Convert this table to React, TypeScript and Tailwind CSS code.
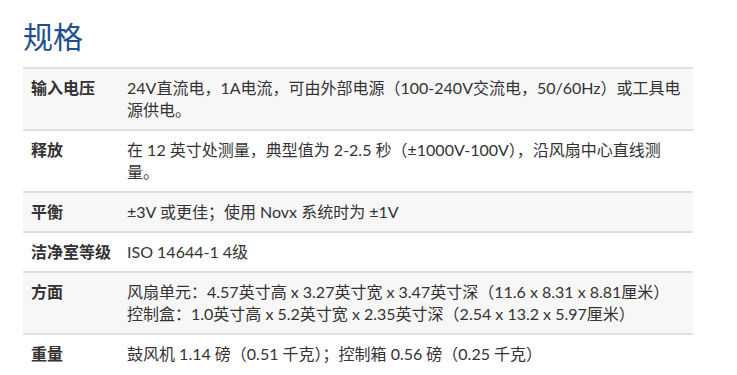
const specs: { label: string; lines: string[] }[] = [
  {
    label: '输入电压',
    lines: ['24V直流电，1A电流，可由外部电源（100-240V交流电，50/60Hz）或工具电源供电。'],
  },
  {
    label: '释放',
    lines: ['在 12 英寸处测量，典型值为 2-2.5 秒（±1000V-100V），沿风扇中心直线测量。'],
  },
  { label: '平衡', lines: ['±3V 或更佳；使用 Novx 系统时为 ±1V'] },
  { label: '洁净室等级', lines: ['ISO 14644-1 4级'] },
  {
    label: '方面',
    lines: [
      '风扇单元：4.57英寸高 x 3.27英寸宽 x 3.47英寸深（11.6 x 8.31 x 8.81厘米）',
      '控制盒：1.0英寸高 x 5.2英寸宽 x 2.35英寸深（2.54 x 13.2 x 5.97厘米）',
    ],
  },
  { label: '重量', lines: ['鼓风机 1.14 磅（0.51 千克）；控制箱 0.56 磅（0.25 千克）'] },
]

export default function App() {
  return (
    <div
      className="min-h-screen bg-white pl-[23px] pt-[17px] text-[#333]"
      style={{ fontFamily: 'Lato, "Noto Sans CJK SC", sans-serif' }}
    >
      <h2 className="text-[30px] leading-[38px] text-[#1f4f8f]">规格</h2>
      <table className="mt-[12px] w-[670px] border-collapse text-[16px] leading-[22px]">
        <tbody>
          {specs.map((row, i) => (
            <tr
              key={row.label}
              className={`border-t-2 border-[#e0e0e0] ${i % 2 === 0 ? 'bg-[#f7f7f7]' : 'bg-white'}`}
            >
              <td className="w-[96px] px-2 pt-[8px] pb-[8px] align-top whitespace-nowrap font-bold">
                {row.label}
              </td>
              <td className="px-2 pt-[8px] pb-[8px] align-top">
                {row.lines.map(line => (
                  <div key={line}>{line}</div>
                ))}
              </td>
            </tr>
          ))}
        </tbody>
      </table>
    </div>
  )
}
